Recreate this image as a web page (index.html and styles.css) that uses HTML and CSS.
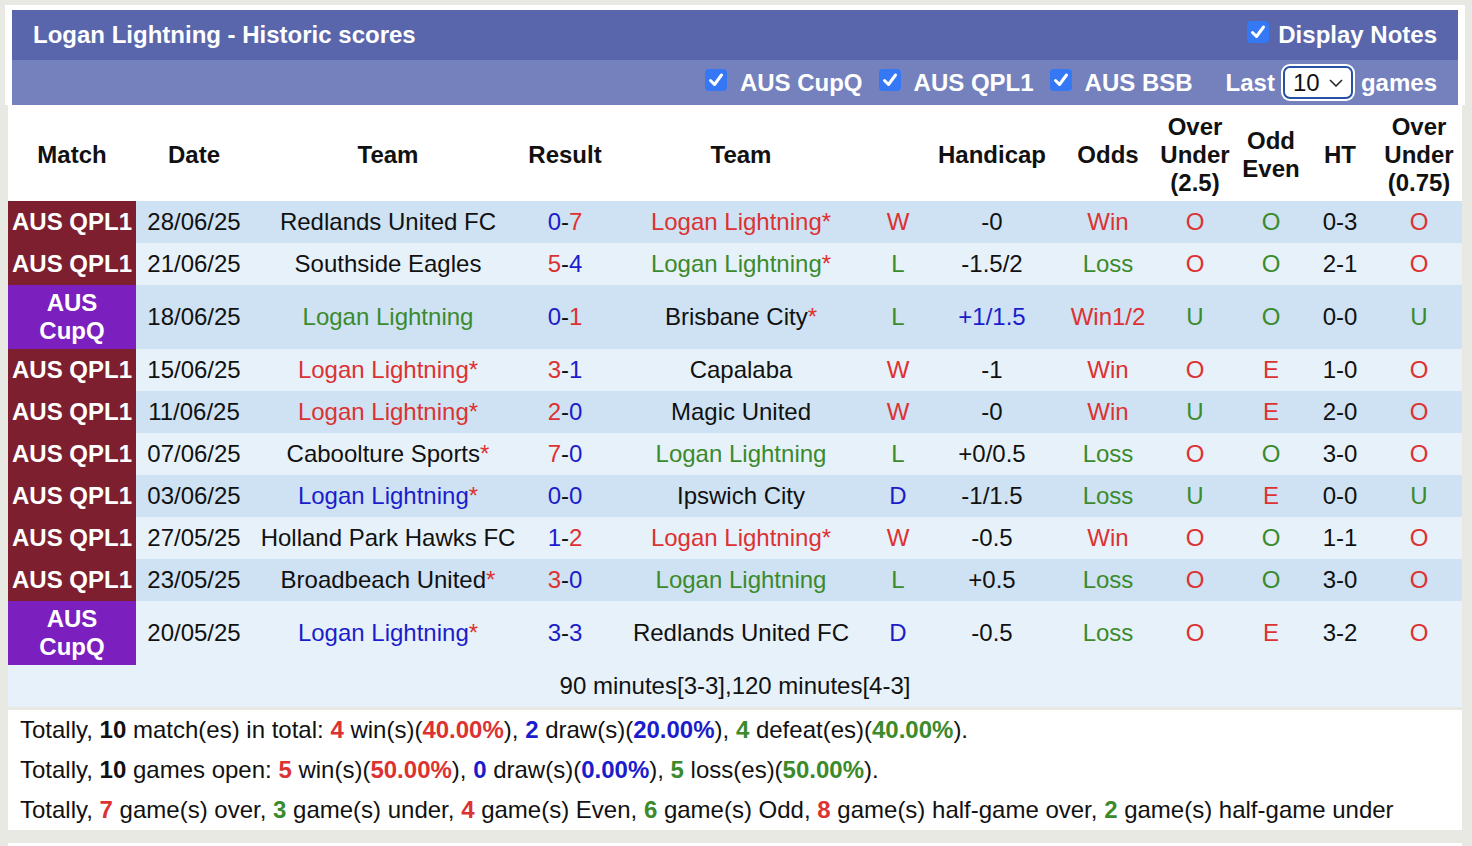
FILE: index.html
```html
<!DOCTYPE html>
<html>
<head>
<meta charset="utf-8">
<link rel="stylesheet" href="styles.css">
</head>
<body>
<div class="top">
  <div class="bar1">
    <span class="title">Logan Lightning - Historic scores</span>
    <label class="opt"><span class="cb"><svg viewBox="0 0 22 22" width="22" height="22"><path d="M5.5 11.5 L9.5 15.5 L16.5 6" fill="none" stroke="#fff" stroke-width="3" stroke-linecap="round" stroke-linejoin="round"/></svg></span>Display Notes</label>
  </div>
  <div class="bar2">
    <label class="opt"><span class="cb"><svg viewBox="0 0 22 22" width="22" height="22"><path d="M5.5 11.5 L9.5 15.5 L16.5 6" fill="none" stroke="#fff" stroke-width="3" stroke-linecap="round" stroke-linejoin="round"/></svg></span>AUS CupQ</label>
    <label class="opt"><span class="cb"><svg viewBox="0 0 22 22" width="22" height="22"><path d="M5.5 11.5 L9.5 15.5 L16.5 6" fill="none" stroke="#fff" stroke-width="3" stroke-linecap="round" stroke-linejoin="round"/></svg></span>AUS QPL1</label>
    <label class="opt"><span class="cb"><svg viewBox="0 0 22 22" width="22" height="22"><path d="M5.5 11.5 L9.5 15.5 L16.5 6" fill="none" stroke="#fff" stroke-width="3" stroke-linecap="round" stroke-linejoin="round"/></svg></span>AUS BSB</label>
    <span class="last">Last</span>
    <span class="sel">10<svg class="chev" viewBox="0 0 14 8" width="14" height="8"><path d="M1 1 L7 7 L13 1" fill="none" stroke="#222" stroke-width="1.5"/></svg></span>
    <span class="games">games</span>
  </div>
</div>

<table class="tbl">
  <colgroup>
    <col class="c-match"><col class="c-date"><col class="c-team"><col class="c-res"><col class="c-team2"><col class="c-wl"><col class="c-hc"><col class="c-odds"><col class="c-ou"><col class="c-oe"><col class="c-ht"><col class="c-ou2">
  </colgroup>
  <thead>
    <tr>
      <th>Match</th><th>Date</th><th>Team</th><th>Result</th><th>Team</th><th></th><th>Handicap</th><th>Odds</th><th>Over<br>Under<br>(2.5)</th><th>Odd<br>Even</th><th>HT</th><th>Over<br>Under<br>(0.75)</th>
    </tr>
  </thead>
  <tbody>
    <tr class="dk">
      <td class="lg qpl">AUS QPL1</td><td>28/06/25</td><td>Redlands United FC</td><td><span class="b">0</span>-<span class="r">7</span></td><td class="r">Logan Lightning<span class="r">*</span></td><td class="r">W</td><td>-0</td><td class="r">Win</td><td class="r">O</td><td class="g">O</td><td>0-3</td><td class="r">O</td>
    </tr>
    <tr class="lt">
      <td class="lg qpl">AUS QPL1</td><td>21/06/25</td><td>Southside Eagles</td><td><span class="r">5</span>-<span class="b">4</span></td><td class="g">Logan Lightning<span class="r">*</span></td><td class="g">L</td><td>-1.5/2</td><td class="g">Loss</td><td class="r">O</td><td class="g">O</td><td>2-1</td><td class="r">O</td>
    </tr>
    <tr class="dk tall">
      <td class="lg cup">AUS<br>CupQ</td><td>18/06/25</td><td class="g">Logan Lightning</td><td><span class="b">0</span>-<span class="r">1</span></td><td>Brisbane City<span class="r">*</span></td><td class="g">L</td><td class="b">+1/1.5</td><td class="r">Win1/2</td><td class="g">U</td><td class="g">O</td><td>0-0</td><td class="g">U</td>
    </tr>
    <tr class="lt">
      <td class="lg qpl">AUS QPL1</td><td>15/06/25</td><td class="r">Logan Lightning<span class="r">*</span></td><td><span class="r">3</span>-<span class="b">1</span></td><td>Capalaba</td><td class="r">W</td><td>-1</td><td class="r">Win</td><td class="r">O</td><td class="r">E</td><td>1-0</td><td class="r">O</td>
    </tr>
    <tr class="dk">
      <td class="lg qpl">AUS QPL1</td><td>11/06/25</td><td class="r">Logan Lightning<span class="r">*</span></td><td><span class="r">2</span>-<span class="b">0</span></td><td>Magic United</td><td class="r">W</td><td>-0</td><td class="r">Win</td><td class="g">U</td><td class="r">E</td><td>2-0</td><td class="r">O</td>
    </tr>
    <tr class="lt">
      <td class="lg qpl">AUS QPL1</td><td>07/06/25</td><td>Caboolture Sports<span class="r">*</span></td><td><span class="r">7</span>-<span class="b">0</span></td><td class="g">Logan Lightning</td><td class="g">L</td><td>+0/0.5</td><td class="g">Loss</td><td class="r">O</td><td class="g">O</td><td>3-0</td><td class="r">O</td>
    </tr>
    <tr class="dk">
      <td class="lg qpl">AUS QPL1</td><td>03/06/25</td><td class="b">Logan Lightning<span class="r">*</span></td><td><span class="b">0</span>-<span class="b">0</span></td><td>Ipswich City</td><td class="b">D</td><td>-1/1.5</td><td class="g">Loss</td><td class="g">U</td><td class="r">E</td><td>0-0</td><td class="g">U</td>
    </tr>
    <tr class="lt">
      <td class="lg qpl">AUS QPL1</td><td>27/05/25</td><td>Holland Park Hawks FC</td><td><span class="b">1</span>-<span class="r">2</span></td><td class="r">Logan Lightning<span class="r">*</span></td><td class="r">W</td><td>-0.5</td><td class="r">Win</td><td class="r">O</td><td class="g">O</td><td>1-1</td><td class="r">O</td>
    </tr>
    <tr class="dk">
      <td class="lg qpl">AUS QPL1</td><td>23/05/25</td><td>Broadbeach United<span class="r">*</span></td><td><span class="r">3</span>-<span class="b">0</span></td><td class="g">Logan Lightning</td><td class="g">L</td><td>+0.5</td><td class="g">Loss</td><td class="r">O</td><td class="g">O</td><td>3-0</td><td class="r">O</td>
    </tr>
    <tr class="lt tall">
      <td class="lg cup">AUS<br>CupQ</td><td>20/05/25</td><td class="b">Logan Lightning<span class="r">*</span></td><td><span class="b">3</span>-<span class="b">3</span></td><td>Redlands United FC</td><td class="b">D</td><td>-0.5</td><td class="g">Loss</td><td class="r">O</td><td class="r">E</td><td>3-2</td><td class="r">O</td>
    </tr>
    <tr class="lt">
      <td colspan="12" class="note">90 minutes[3-3],120 minutes[4-3]</td>
    </tr>
  </tbody>
</table>

<div class="summary">
  <p>Totally, <b>10</b> match(es) in total: <b class="r">4</b> win(s)(<b class="r">40.00%</b>), <b class="b">2</b> draw(s)(<b class="b">20.00%</b>), <b class="g">4</b> defeat(es)(<b class="g">40.00%</b>).</p>
  <p>Totally, <b>10</b> games open: <b class="r">5</b> win(s)(<b class="r">50.00%</b>), <b class="b">0</b> draw(s)(<b class="b">0.00%</b>), <b class="g">5</b> loss(es)(<b class="g">50.00%</b>).</p>
  <p>Totally, <b class="r">7</b> game(s) over, <b class="g">3</b> game(s) under, <b class="r">4</b> game(s) Even, <b class="g">6</b> game(s) Odd, <b class="r">8</b> game(s) half-game over, <b class="g">2</b> game(s) half-game under</p>
</div>
<div class="next"></div>
</body>
</html>
```

FILE: styles.css
```css
html, body {
  margin: 0;
  padding: 0;
  background: #e9e9e4;
  font-family: "Liberation Sans", Arial, sans-serif;
  font-size: 24px;
  color: #111;
  overflow: hidden;
}

.top {
  margin: 5px 7px 0 5px;
  background: #fff;
  padding: 5px 7px 0 7px;
}

.bar1 {
  height: 50px;
  background: #5966ac;
  display: flex;
  align-items: center;
  justify-content: space-between;
  padding: 0 21px 0 21px;
  color: #fff;
  font-weight: bold;
}

.bar2 {
  height: 45px;
  background: #7481bd;
  display: flex;
  align-items: center;
  justify-content: flex-end;
  padding: 0 21px 0 0;
  color: #fff;
  font-weight: bold;
}

.opt {
  display: flex;
  align-items: center;
}

.cb {
  width: 22px;
  height: 22px;
  border-radius: 4px;
  background: #3478f6;
  display: inline-block;
  margin-right: 9px;
  position: relative;
  top: -3px;
}

.cb svg { display: block; }

.bar2 .opt { margin-left: 16px; }
.bar2 .opt .cb { margin-right: 13px; }

.last { margin-left: 33px; }

.sel {
  margin-left: 8px;
  width: 70px;
  height: 33px;
  box-sizing: border-box;
  border: 2px solid #2552a3;
  border-radius: 7px;
  box-shadow: 0 0 0 2px #fff;
  background: #fff;
  color: #111;
  font-weight: normal;
  display: flex;
  align-items: center;
  padding-left: 8px;
}

.chev { margin-left: 9px; }

.games { margin-left: 8px; }

.tbl {
  margin: 0 10px 0 8px;
  width: 1454px;
  table-layout: fixed;
  border-collapse: collapse;
  border-spacing: 0;
}

.c-match { width: 128px; }
.c-date { width: 116px; }
.c-team { width: 272px; }
.c-res { width: 82px; }
.c-team2 { width: 270px; }
.c-wl { width: 44px; }
.c-hc { width: 144px; }
.c-odds { width: 88px; }
.c-ou { width: 86px; }
.c-oe { width: 66px; }
.c-ht { width: 72px; }
.c-ou2 { width: 86px; }

.tbl th {
  background: #fff;
  height: 96px;
  box-sizing: border-box;
  padding: 4px 0 0 0;
  font-weight: bold;
  line-height: 28px;
  text-align: center;
  vertical-align: middle;
  white-space: nowrap;
}

.tbl td {
  height: 42px;
  padding: 0;
  text-align: center;
  vertical-align: middle;
  white-space: nowrap;
  line-height: 28px;
}

.tbl tr.tall td { height: 64px; }

.dk td { background: #cee2f3; }
.lt td { background: #e7f1fa; }

.tbl td.lg {
  color: #fff;
  font-weight: bold;
  line-height: 28px;
}
.tbl td.qpl { background: #7e1f2f; }
.tbl td.cup { background: #7b1fbe; }

.r { color: #dc3232; }
.g { color: #3b8a2c; }
.b { color: #1c1ccc; }

.note { color: #111; }

.summary {
  margin: 3px 10px 0 8px;
  background: #fff;
  padding: 0 12px;
  height: 120px;
  box-sizing: border-box;
}

.summary p {
  margin: 0;
  height: 40px;
  line-height: 40px;
  white-space: nowrap;
}

.summary b { font-weight: bold; }

.next {
  margin: 13px 10px 0 8px;
  background: #fff;
  height: 20px;
}
```
